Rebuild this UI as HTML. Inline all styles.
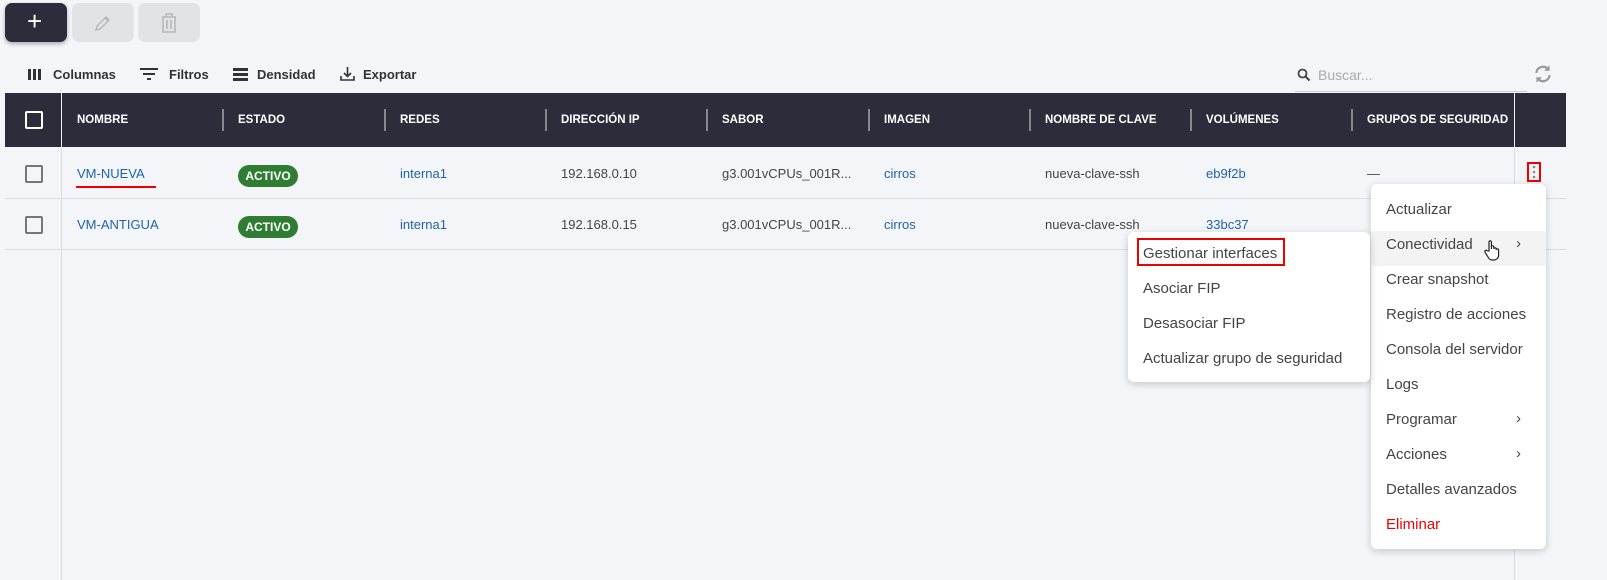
<!DOCTYPE html>
<html><head><meta charset="utf-8"><style>
body{margin:0;width:1607px;height:580px;background:#f4f5f9;font-family:"Liberation Sans",sans-serif;position:relative;overflow:hidden;color:#333}
.a{position:absolute}
.btn{position:absolute;top:3px;width:62px;height:39px;border-radius:7px}
.tb{position:absolute;top:67px;font-size:13px;font-weight:bold;color:#333}
.hd{position:absolute;top:93px;left:5px;width:1561px;height:54px;background:#2d2c3a}
.th{position:absolute;top:114px;font-size:11.5px;font-weight:bold;color:#fff}
.sep{position:absolute;top:109px;width:2px;height:22px;background:#888}
.td{position:absolute;font-size:13px;color:#444}
.lk{color:#1e63a8}
.cb{position:absolute;left:25px;width:14px;height:14px;border:2px solid #777;border-radius:2px}
.badge{position:absolute;left:238px;width:60px;height:22px;border-radius:11px;background:#2e7d32;color:#fff;font-size:12px;font-weight:bold;text-align:center;line-height:22px}
.menu{position:absolute;background:#fff;border-radius:6px;box-shadow:0 2px 8px rgba(0,0,0,.2)}
.mi{position:absolute;left:15px;font-size:15px;color:#444}
.chev{position:absolute;font-size:15px;color:#444}
</style></head><body>
<div class="btn" style="left:5px;background:#2d2c3a;box-shadow:0 2px 4px rgba(0,0,0,.3)"><span class="a" style="left:22px;top:3px;color:#fff;font-size:26px">+</span></div>
<div class="btn" style="left:72px;background:#e2e3e7"><svg class="a" style="left:21px;top:10px" width="20" height="20" viewBox="0 0 20 20"><path d="M3 17l1-4 9-9 3 3-9 9z M12 5l3 3" fill="none" stroke="#b8b8bc" stroke-width="1.5"/></svg></div>
<div class="btn" style="left:138px;background:#e2e3e7"><svg class="a" style="left:22px;top:9px" width="18" height="22" viewBox="0 0 18 22"><path d="M2 5h14M6 5V2h6v3M3 5v15h12V5M7 8v9M11 8v9" fill="none" stroke="#b8b8bc" stroke-width="1.6"/></svg></div>

<svg class="a" style="left:28px;top:69px" width="14" height="11"><rect x="0" y="0" width="3" height="11" fill="#333"/><rect x="5" y="0" width="3" height="11" fill="#333"/><rect x="10" y="0" width="3" height="11" fill="#333"/></svg>
<div class="tb" style="left:53px">Columnas</div>
<svg class="a" style="left:140px;top:68px" width="18" height="13"><rect x="0" y="0" width="18" height="2" fill="#333"/><rect x="3" y="5" width="12" height="2" fill="#333"/><rect x="7" y="10" width="4" height="2" fill="#333"/></svg>
<div class="tb" style="left:169px">Filtros</div>
<svg class="a" style="left:233px;top:68px" width="15" height="13"><rect y="0" width="15" height="3" fill="#333"/><rect y="5" width="15" height="3" fill="#333"/><rect y="10" width="15" height="3" fill="#333"/></svg>
<div class="tb" style="left:257px">Densidad</div>
<svg class="a" style="left:340px;top:66px" width="15" height="15"><path d="M7.5 1v9M4 7l3.5 3.5L11 7M1 10v4h13v-4" fill="none" stroke="#333" stroke-width="1.6"/></svg>
<div class="tb" style="left:363px">Exportar</div>

<svg class="a" style="left:1297px;top:68px" width="14" height="14"><circle cx="5.5" cy="5.5" r="4" fill="none" stroke="#444" stroke-width="1.8"/><path d="M8.5 8.5l4 4" stroke="#444" stroke-width="2"/></svg>
<div class="a" style="left:1318px;top:67px;font-size:14px;color:#aaa">Buscar...</div>
<div class="a" style="left:1295px;top:91px;width:232px;height:1px;background:#ccc"></div>
<svg class="a" style="left:1532px;top:63px" width="22" height="22" viewBox="0 0 20 20"><path d="M4 9a6 6 0 0 1 10-4l1 1M16 11a6 6 0 0 1-10 4l-1-1" fill="none" stroke="#999" stroke-width="2"/><path d="M16 2v5h-5zM4 18v-5h5z" fill="#999"/></svg>

<div class="hd"></div>
<div class="a" style="left:25px;top:111px;width:14px;height:14px;border:2px solid #fff;border-radius:2px"></div>
<div class="a" style="left:61px;top:93px;width:1px;height:487px;background:#ddd"></div>
<div class="a" style="left:61px;top:93px;width:1px;height:54px;background:#eee"></div>
<div class="a" style="left:1514px;top:93px;width:1px;height:487px;background:#ddd"></div>
<div class="a" style="left:1514px;top:93px;width:1px;height:54px;background:#eee"></div>
<div class="th" style="left:77px">NOMBRE</div>
<div class="sep" style="left:222px"></div><div class="th" style="left:238px">ESTADO</div>
<div class="sep" style="left:384px"></div><div class="th" style="left:400px">REDES</div>
<div class="sep" style="left:545px"></div><div class="th" style="left:561px">DIRECCIÓN IP</div>
<div class="sep" style="left:706px"></div><div class="th" style="left:722px">SABOR</div>
<div class="sep" style="left:868px"></div><div class="th" style="left:884px">IMAGEN</div>
<div class="sep" style="left:1029px"></div><div class="th" style="left:1045px">NOMBRE DE CLAVE</div>
<div class="sep" style="left:1190px"></div><div class="th" style="left:1206px">VOLÚMENES</div>
<div class="sep" style="left:1351px"></div><div class="th" style="left:1367px">GRUPOS DE SEGURIDAD</div>

<div class="a" style="left:5px;top:198px;width:1561px;height:1px;background:#ddd"></div>
<div class="a" style="left:5px;top:249px;width:1561px;height:1px;background:#ddd"></div>

<div class="cb" style="top:165px"></div>
<div class="td lk" style="left:77px;top:166px">VM-NUEVA</div>
<div class="a" style="left:76px;top:186px;width:80px;height:2px;background:#e00"></div>
<div class="badge" style="top:165px">ACTIVO</div>
<div class="td lk" style="left:400px;top:166px">interna1</div>
<div class="td" style="left:561px;top:166px">192.168.0.10</div>
<div class="td" style="left:722px;top:166px">g3.001vCPUs_001R...</div>
<div class="td lk" style="left:884px;top:166px">cirros</div>
<div class="td" style="left:1045px;top:166px">nueva-clave-ssh</div>
<div class="td lk" style="left:1206px;top:166px">eb9f2b</div>
<div class="td" style="left:1367px;top:166px">—</div>
<div class="a" style="left:1527px;top:162px;width:14px;height:20px;border:2px solid #e00;box-sizing:border-box"></div>
<svg class="a" style="left:1532px;top:165px" width="4" height="14"><circle cx="2" cy="2" r="1.3" fill="#888"/><circle cx="2" cy="7" r="1.3" fill="#888"/><circle cx="2" cy="12" r="1.3" fill="#888"/></svg>

<div class="cb" style="top:216px"></div>
<div class="td lk" style="left:77px;top:217px">VM-ANTIGUA</div>
<div class="badge" style="top:216px">ACTIVO</div>
<div class="td lk" style="left:400px;top:217px">interna1</div>
<div class="td" style="left:561px;top:217px">192.168.0.15</div>
<div class="td" style="left:722px;top:217px">g3.001vCPUs_001R...</div>
<div class="td lk" style="left:884px;top:217px">cirros</div>
<div class="td" style="left:1045px;top:217px">nueva-clave-ssh</div>
<div class="td lk" style="left:1206px;top:217px">33bc37</div>

<div class="menu" style="left:1371px;top:184px;width:175px;height:365px">
<div class="a" style="left:0;top:47px;width:175px;height:35px;background:#f3f3f3"></div>
<div class="mi" style="top:17px">Actualizar</div>
<div class="mi" style="top:52px">Conectividad</div><div class="chev" style="left:145px;top:51px">›</div>
<div class="mi" style="top:87px">Crear snapshot</div>
<div class="mi" style="top:122px">Registro de acciones</div>
<div class="mi" style="top:157px">Consola del servidor</div>
<div class="mi" style="top:192px">Logs</div>
<div class="mi" style="top:227px">Programar</div><div class="chev" style="left:145px;top:226px">›</div>
<div class="mi" style="top:262px">Acciones</div><div class="chev" style="left:145px;top:261px">›</div>
<div class="mi" style="top:297px">Detalles avanzados</div>
<div class="mi" style="top:332px;color:#e00">Eliminar</div>
<svg class="a" style="left:113px;top:55px" width="16" height="22" viewBox="0 0 16 22"><path d="M5 12V3a1.2 1.2 0 0 1 2.4 0v7V8a1.2 1.2 0 0 1 2.4 0v2a1.2 1.2 0 0 1 2.4 0v1a1.2 1.2 0 0 1 2.4 0v5c0 3-2 5-5 5H8c-2 0-3-1-4-3l-3-5a1.2 1.2 0 0 1 2-1.3z" fill="#fff" stroke="#222" stroke-width="1.2"/></svg>
</div>

<div class="menu" style="left:1128px;top:232px;width:242px;height:150px">
<div class="mi" style="top:13px">Gestionar interfaces</div>
<div class="a" style="left:9px;top:6px;width:148px;height:28px;border:2px solid #e00;box-sizing:border-box"></div>
<div class="mi" style="top:48px">Asociar FIP</div>
<div class="mi" style="top:83px">Desasociar FIP</div>
<div class="mi" style="top:118px">Actualizar grupo de seguridad</div>
</div>
</body></html>
